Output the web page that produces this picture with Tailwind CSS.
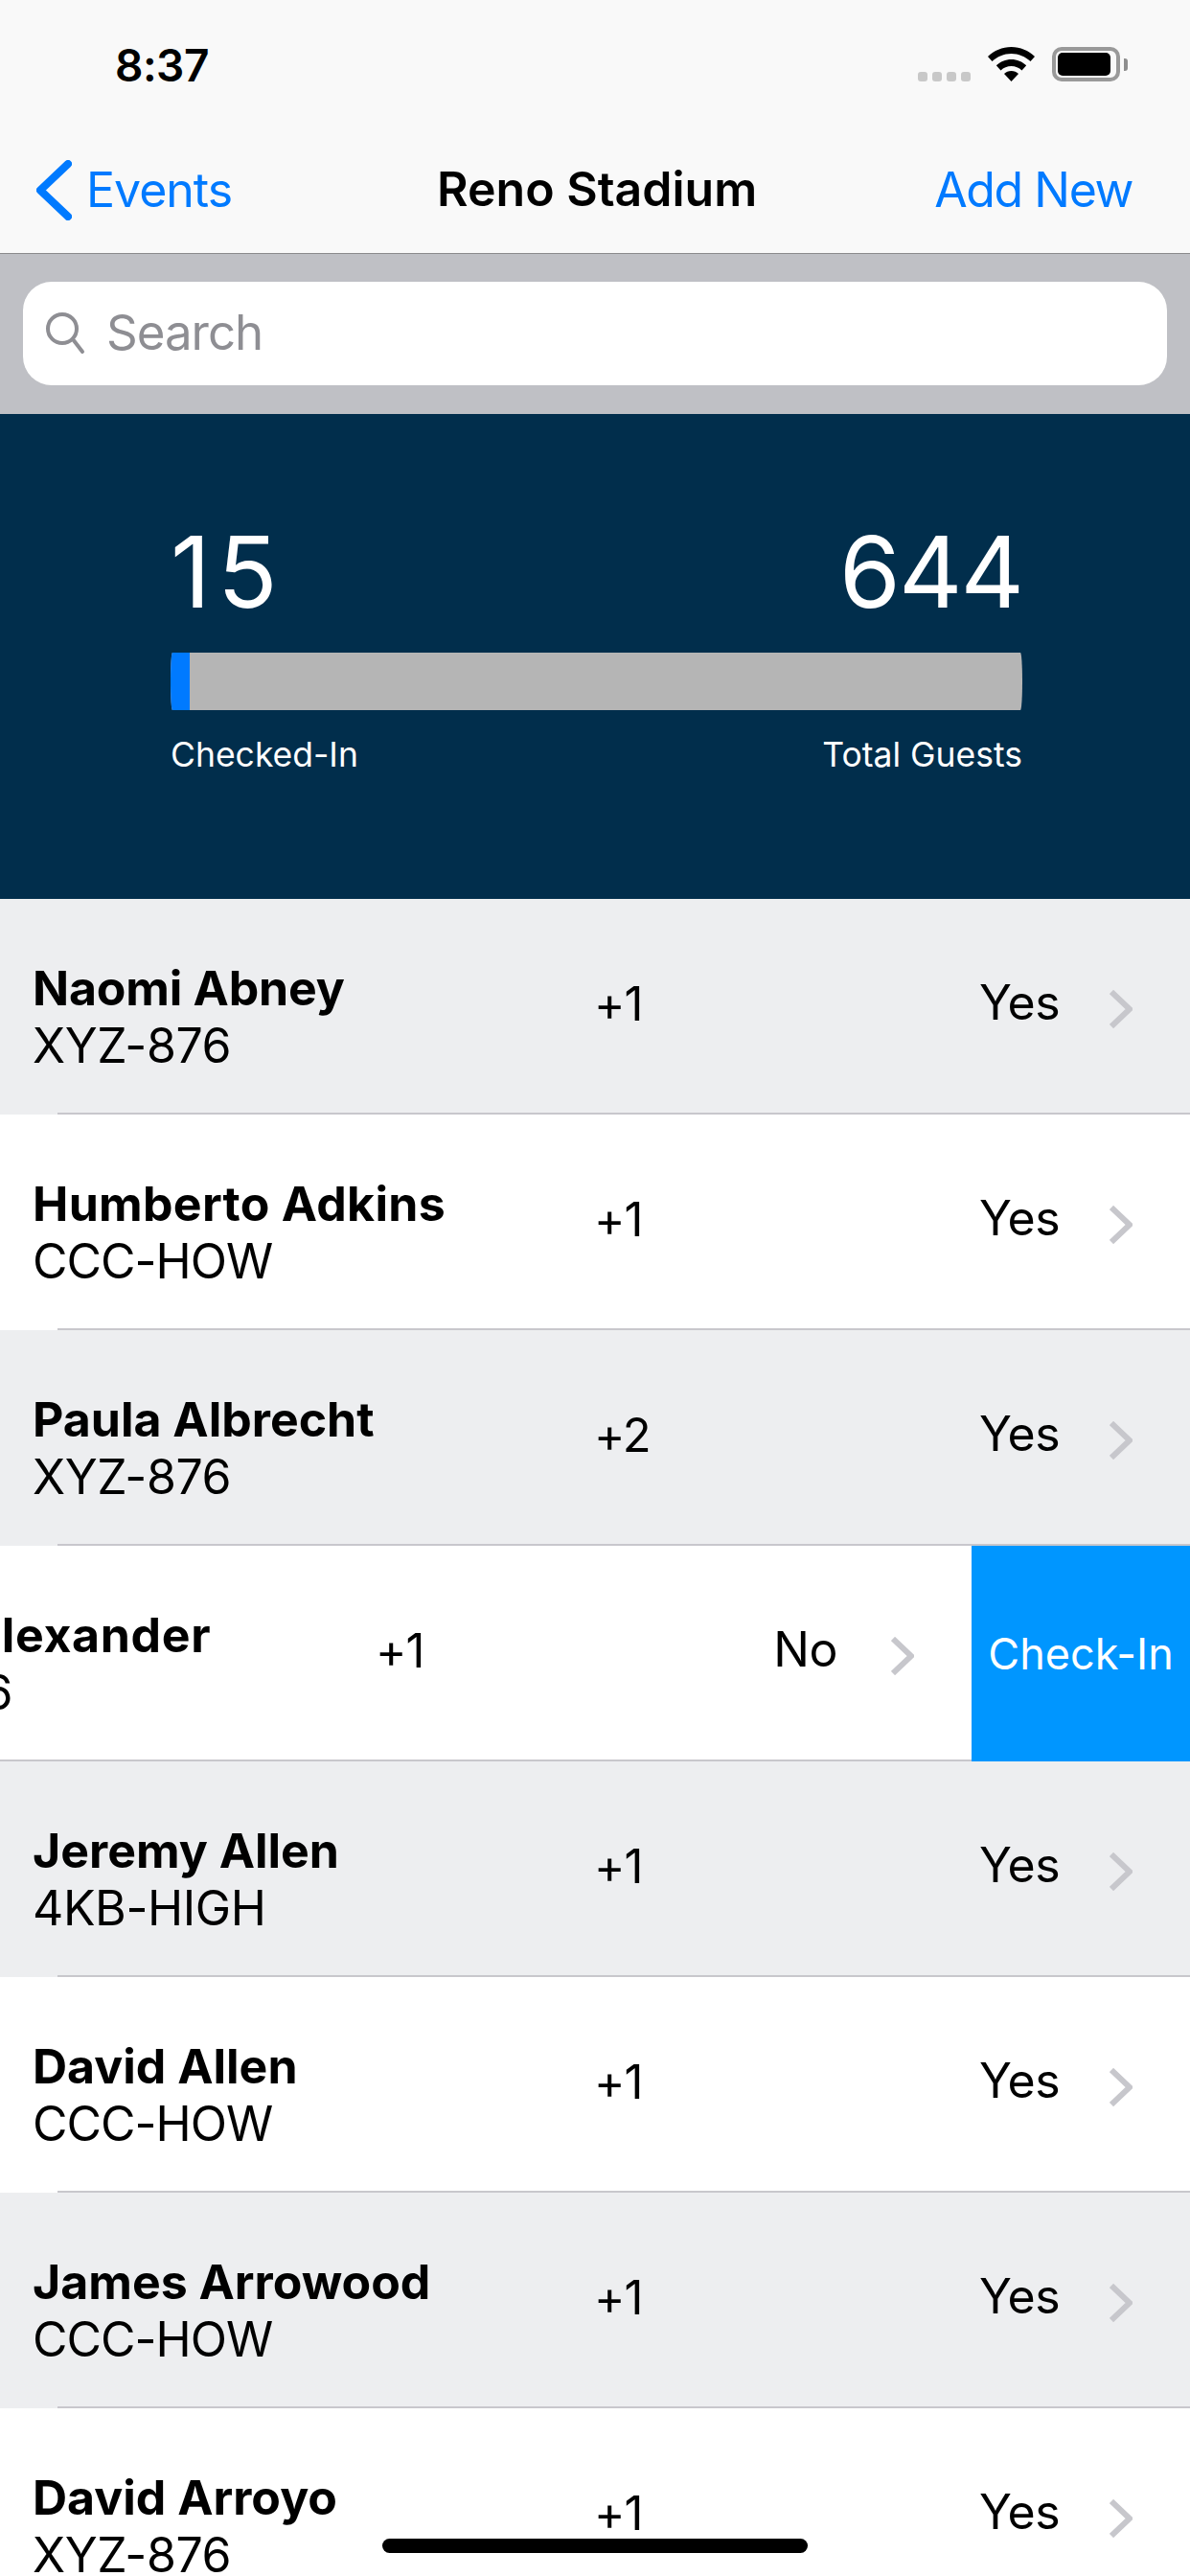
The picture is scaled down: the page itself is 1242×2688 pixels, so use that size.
<!DOCTYPE html>
<html lang="en">
<head>
  <meta charset="UTF-8" />
  <meta name="viewport" content="width=device-width, initial-scale=1.0"/>
  <title>Reno Stadium</title>
  <script src="https://cdn.jsdelivr.net/npm/@tailwindcss/browser@4"></script>
</head>
<body class="bg-white">
  <div class="relative w-[1242px] h-[2688px] overflow-hidden bg-white text-black font-['Inter','Liberation_Sans',sans-serif]">

    <!-- Status + nav bar -->
    <header class="h-[265px] bg-[#f9f9f9] border-b border-[#8a8a8c]">
      <div class="h-[132px] flex items-start pt-[41px] pl-[120px] pr-[65px]">
        <span class="text-[46px] leading-[54px] font-semibold tracking-[-0.5px]">8:37</span>
        <div class="ml-auto flex items-start gap-[18px] pt-[8px]">
          <div class="flex gap-[5px] mt-[26px]">
            <span class="w-[10px] h-[10px] rounded-[3px] bg-[#c8c8c8]"></span>
            <span class="w-[10px] h-[10px] rounded-[3px] bg-[#c8c8c8]"></span>
            <span class="w-[10px] h-[10px] rounded-[3px] bg-[#c8c8c8]"></span>
            <span class="w-[10px] h-[10px] rounded-[3px] bg-[#c8c8c8]"></span>
          </div>
          <svg class="w-[49px] h-[36px]" viewBox="0 0 49 36" fill="#000">
            <path d="M24.5 0C15 0 6.6 3.7 0 10l4.5 5C9.9 10 16.8 7 24.5 7s14.6 3 20 8l4.5-5C42.4 3.700 34 0 24.500 0z"/>
            <path d="M24.500 13c-6 0-11.500 2.300-15.700 6.300l4.700 5.200c2.900-2.700 6.800-4.400 11-4.400s8.100 1.700 11 4.400l4.700-5.200C36 15.300 30.500 13 24.500 13z"/>
            <path d="M24.500 25c-2.900 0-5.500 1.100-7.500 2.900l7.500 8.100 7.500-8.100c-2-1.800-4.600-2.900-7.500-2.900z"/>
          </svg>
          <div class="flex items-center gap-[4px]">
            <div class="w-[71px] h-[36px] rounded-[10px] border-[4px] border-[#999999] p-[2px]">
              <div class="w-[55px] h-full rounded-[5px] bg-black"></div>
            </div>
            <span class="w-[4px] h-[13px] rounded-r-[3px] bg-[#8e8e8e]"></span>
          </div>
        </div>
      </div>
      <nav class="relative h-[132px] flex items-center justify-between pl-[38px] pr-[60px] text-[50px] text-[#007aff] tracking-[-1px]">
        <div class="flex items-center gap-[15px]">
          <svg class="w-[37px] h-[63px]" viewBox="0 0 37 63" fill="none" stroke="#007aff" stroke-width="8" stroke-linecap="round" stroke-linejoin="round">
            <path d="M33 4 4 31.500 33 59"/>
          </svg>
          <span class="leading-[60px]">Events</span>
        </div>
        <span class="absolute left-[456px] top-[35px] leading-[60px] font-semibold text-black tracking-normal">Reno Stadium</span>
        <span class="leading-[60px] tracking-[-1.4px]">Add New</span>
      </nav>
    </header>

    <!-- Search -->
    <div class="h-[167px] bg-[#bfc0c5] px-[24px] pt-[29px]">
      <div class="h-[108px] rounded-[30px] bg-white flex items-center pl-[21px] gap-[16px]">
        <svg class="w-[50px] h-[50px]" viewBox="0 0 50 50" fill="none" stroke="#8e8e93" stroke-width="4" stroke-linecap="round">
          <circle cx="20" cy="20" r="15"/>
          <path d="M31 31 41 44"/>
        </svg>
        <span class="text-[51px] leading-[60px] text-[#8e8e93] tracking-[-1px] -mt-[2px]">Search</span>
      </div>
    </div>

    <!-- Counters -->
    <section class="h-[506px] bg-[#012e4c] pl-[178px] pr-[175px] pt-[103px] text-white">
      <div class="flex justify-between text-[103px] leading-[124px]">
        <span class="tracking-[7px]">15</span>
        <span class="tracking-[-2px]">644</span>
      </div>
      <div class="mt-[22px] h-[60px] rounded-[2px/30px] bg-[#b5b5b5] overflow-hidden">
        <div class="w-[20px] h-full bg-[#007aff]"></div>
      </div>
      <div class="mt-[25px] flex justify-between text-[35.5px] leading-[44px]">
        <span>Checked-In</span>
        <span>Total Guests</span>
      </div>
    </section>

    <!-- Guests -->
    <ul>
      <li class="relative h-[225px] bg-[#edeef0]">
        <div class="flex items-center h-full w-[1242px] pl-[34px]">
          <div class="w-[586px] pt-[20px]"><p class="text-[50px] leading-[60px] font-bold tracking-[-0.2px]">Naomi Abney</p><p class="text-[50px] leading-[60px] tracking-[-0.4px]">XYZ-876</p></div>
          <span class="w-[402px] text-[49px] leading-[60px] tracking-[-1px] pb-[6px]">+1</span>
          <span class="w-[80px] text-right text-[50px] leading-[60px] tracking-[-0.5px] pb-[10px]">Yes</span>
          <svg class="ml-[56px] w-[24px] h-[40px] mt-[4px]" viewBox="0 0 24 40" fill="none" stroke="#c7c7cc" stroke-width="6"><path d="M2 2 21 20 2 38"/></svg>
        </div>
        <span class="absolute left-[60px] right-0 bottom-0 h-[2px] bg-[#c8c7cc]"></span>
      </li>
      <li class="relative h-[225px] bg-white">
        <div class="flex items-center h-full w-[1242px] pl-[34px]">
          <div class="w-[586px] pt-[20px]"><p class="text-[50px] leading-[60px] font-bold tracking-[0.3px]">Humberto Adkins</p><p class="text-[50px] leading-[60px] tracking-[-1px]">CCC-HOW</p></div>
          <span class="w-[402px] text-[49px] leading-[60px] tracking-[-1px] pb-[6px]">+1</span>
          <span class="w-[80px] text-right text-[50px] leading-[60px] tracking-[-0.5px] pb-[10px]">Yes</span>
          <svg class="ml-[56px] w-[24px] h-[40px] mt-[4px]" viewBox="0 0 24 40" fill="none" stroke="#c7c7cc" stroke-width="6"><path d="M2 2 21 20 2 38"/></svg>
        </div>
        <span class="absolute left-[60px] right-0 bottom-0 h-[2px] bg-[#c8c7cc]"></span>
      </li>
      <li class="relative h-[225px] bg-[#edeef0]">
        <div class="flex items-center h-full w-[1242px] pl-[34px]">
          <div class="w-[586px] pt-[20px]"><p class="text-[50px] leading-[60px] font-bold">Paula Albrecht</p><p class="text-[50px] leading-[60px] tracking-[-0.4px]">XYZ-876</p></div>
          <span class="w-[402px] text-[49px] leading-[60px] tracking-[-1px] pb-[6px]">+2</span>
          <span class="w-[80px] text-right text-[50px] leading-[60px] tracking-[-0.5px] pb-[10px]">Yes</span>
          <svg class="ml-[56px] w-[24px] h-[40px] mt-[4px]" viewBox="0 0 24 40" fill="none" stroke="#c7c7cc" stroke-width="6"><path d="M2 2 21 20 2 38"/></svg>
        </div>
        <span class="absolute left-[60px] right-0 bottom-0 h-[2px] bg-[#c8c7cc]"></span>
      </li>
      <!-- swiped open row -->
      <li class="relative h-[225px] bg-white flex overflow-hidden">
        <span class="absolute left-0 right-0 bottom-0 h-[2px] bg-[#c8c7cc]"></span>
        <div class="flex items-center h-full w-[1242px] shrink-0 -ml-[228px] pl-[34px]">
          <div class="w-[586px] pt-[20px] whitespace-nowrap"><p class="text-[50px] leading-[60px] font-bold tracking-[0.7px]">Sarah Alexander</p><p class="text-[50px] leading-[60px] tracking-[-0.4px]">XYZ-876</p></div>
          <span class="w-[402px] text-[49px] leading-[60px] tracking-[-1px] pb-[6px]">+1</span>
          <span class="w-[80px] text-right text-[50px] leading-[60px] tracking-[-0.5px] pb-[10px]">No</span>
          <svg class="ml-[56px] w-[24px] h-[40px] mt-[4px]" viewBox="0 0 24 40" fill="none" stroke="#c7c7cc" stroke-width="6"><path d="M2 2 21 20 2 38"/></svg>
        </div>
        <div class="relative w-[228px] shrink-0 h-full bg-[#0096ff] flex items-center justify-center text-white text-[45px]">Check-In</div>
      </li>
      <li class="relative h-[225px] bg-[#edeef0]">
        <div class="flex items-center h-full w-[1242px] pl-[34px]">
          <div class="w-[586px] pt-[20px]"><p class="text-[50px] leading-[60px] font-bold">Jeremy Allen</p><p class="text-[50px] leading-[60px] tracking-[-0.4px]">4KB-HIGH</p></div>
          <span class="w-[402px] text-[49px] leading-[60px] tracking-[-1px] pb-[6px]">+1</span>
          <span class="w-[80px] text-right text-[50px] leading-[60px] tracking-[-0.5px] pb-[10px]">Yes</span>
          <svg class="ml-[56px] w-[24px] h-[40px] mt-[4px]" viewBox="0 0 24 40" fill="none" stroke="#c7c7cc" stroke-width="6"><path d="M2 2 21 20 2 38"/></svg>
        </div>
        <span class="absolute left-[60px] right-0 bottom-0 h-[2px] bg-[#c8c7cc]"></span>
      </li>
      <li class="relative h-[225px] bg-white">
        <div class="flex items-center h-full w-[1242px] pl-[34px]">
          <div class="w-[586px] pt-[20px]"><p class="text-[50px] leading-[60px] font-bold">David Allen</p><p class="text-[50px] leading-[60px] tracking-[-1px]">CCC-HOW</p></div>
          <span class="w-[402px] text-[49px] leading-[60px] tracking-[-1px] pb-[6px]">+1</span>
          <span class="w-[80px] text-right text-[50px] leading-[60px] tracking-[-0.5px] pb-[10px]">Yes</span>
          <svg class="ml-[56px] w-[24px] h-[40px] mt-[4px]" viewBox="0 0 24 40" fill="none" stroke="#c7c7cc" stroke-width="6"><path d="M2 2 21 20 2 38"/></svg>
        </div>
        <span class="absolute left-[60px] right-0 bottom-0 h-[2px] bg-[#c8c7cc]"></span>
      </li>
      <li class="relative h-[225px] bg-[#edeef0]">
        <div class="flex items-center h-full w-[1242px] pl-[34px]">
          <div class="w-[586px] pt-[20px]"><p class="text-[50px] leading-[60px] font-bold">James Arrowood</p><p class="text-[50px] leading-[60px] tracking-[-1px]">CCC-HOW</p></div>
          <span class="w-[402px] text-[49px] leading-[60px] tracking-[-1px] pb-[6px]">+1</span>
          <span class="w-[80px] text-right text-[50px] leading-[60px] tracking-[-0.5px] pb-[10px]">Yes</span>
          <svg class="ml-[56px] w-[24px] h-[40px] mt-[4px]" viewBox="0 0 24 40" fill="none" stroke="#c7c7cc" stroke-width="6"><path d="M2 2 21 20 2 38"/></svg>
        </div>
        <span class="absolute left-[60px] right-0 bottom-0 h-[2px] bg-[#c8c7cc]"></span>
      </li>
      <li class="relative h-[225px] bg-white">
        <div class="flex items-center h-full w-[1242px] pl-[34px]">
          <div class="w-[586px] pt-[20px]"><p class="text-[50px] leading-[60px] font-bold">David Arroyo</p><p class="text-[50px] leading-[60px] tracking-[-0.4px]">XYZ-876</p></div>
          <span class="w-[402px] text-[49px] leading-[60px] tracking-[-1px] pb-[6px]">+1</span>
          <span class="w-[80px] text-right text-[50px] leading-[60px] tracking-[-0.5px] pb-[10px]">Yes</span>
          <svg class="ml-[56px] w-[24px] h-[40px] mt-[4px]" viewBox="0 0 24 40" fill="none" stroke="#c7c7cc" stroke-width="6"><path d="M2 2 21 20 2 38"/></svg>
        </div>
      </li>
    </ul>

    <!-- Home indicator -->
    <div class="absolute left-[399px] top-[2649px] w-[444px] h-[15px] rounded-full bg-black"></div>
  </div>
</body>
</html>
